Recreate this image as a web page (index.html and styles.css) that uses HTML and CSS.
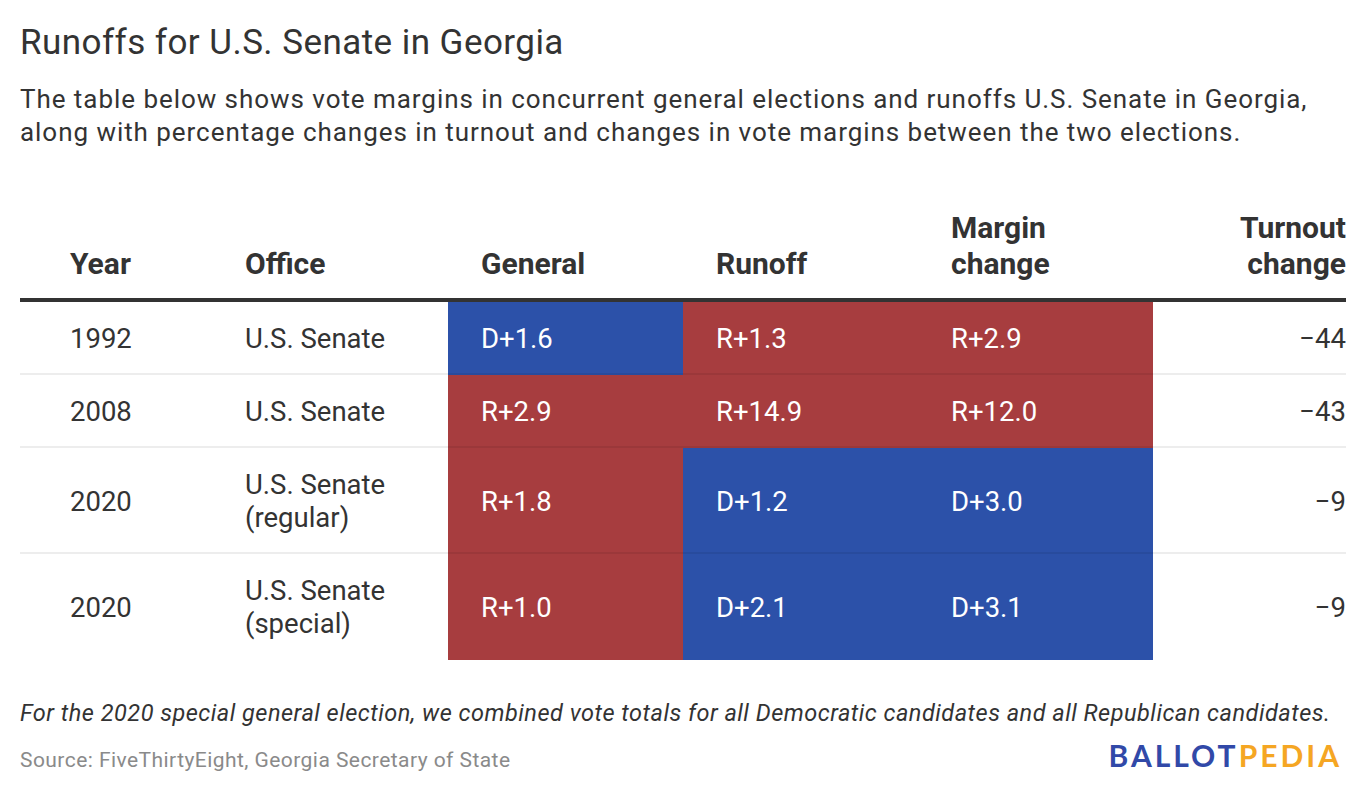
FILE: index.html
```html
<!DOCTYPE html>
<html lang="en">
<head>
<meta charset="utf-8">
<title>Runoffs for U.S. Senate in Georgia</title>
<link rel="stylesheet" href="styles.css">
</head>
<body>
<div class="chart">
  <h1 class="title">Runoffs for U.S. Senate in Georgia</h1>
  <p class="desc">The table below shows vote margins in concurrent general elections and runoffs U.S. Senate in Georgia, along with percentage changes in turnout and changes in vote margins between the two elections.</p>
  <table class="data">
    <colgroup>
      <col class="c-year"><col class="c-office"><col class="c-val"><col class="c-val"><col class="c-val"><col class="c-turn">
    </colgroup>
    <thead>
      <tr>
        <th class="year">Year</th>
        <th class="office">Office</th>
        <th class="val">General</th>
        <th class="val">Runoff</th>
        <th class="val">Margin<br>change</th>
        <th class="turn">Turnout<br>change</th>
      </tr>
    </thead>
    <tbody>
      <tr>
        <td class="year">1992</td>
        <td class="office">U.S. Senate</td>
        <td class="val dem">D+1.6</td>
        <td class="val rep">R+1.3</td>
        <td class="val rep">R+2.9</td>
        <td class="turn">&minus;44</td>
      </tr>
      <tr>
        <td class="year">2008</td>
        <td class="office">U.S. Senate</td>
        <td class="val rep">R+2.9</td>
        <td class="val rep">R+14.9</td>
        <td class="val rep">R+12.0</td>
        <td class="turn">&minus;43</td>
      </tr>
      <tr>
        <td class="year">2020</td>
        <td class="office">U.S. Senate<br>(regular)</td>
        <td class="val rep">R+1.8</td>
        <td class="val dem">D+1.2</td>
        <td class="val dem">D+3.0</td>
        <td class="turn">&minus;9</td>
      </tr>
      <tr class="last">
        <td class="year">2020</td>
        <td class="office">U.S. Senate<br>(special)</td>
        <td class="val rep">R+1.0</td>
        <td class="val dem">D+2.1</td>
        <td class="val dem">D+3.1</td>
        <td class="turn">&minus;9</td>
      </tr>
    </tbody>
  </table>
  <p class="note">For the 2020 special general election, we combined vote totals for all Democratic candidates and all Republican candidates.</p>
  <div class="footer">
    <span class="source">Source: FiveThirtyEight, Georgia Secretary of State</span>
    <span class="logo"><span class="logo-a">BALLOT</span><span class="logo-b">PEDIA</span></span>
  </div>
</div>
</body>
</html>
```
FILE: styles.css
```css
html, body {
  margin: 0;
  padding: 0;
  background: #ffffff;
}
body {
  font-family: Roboto, "Liberation Sans", sans-serif;
  color: #333333;
}
.chart {
  padding: 23px 20px 0 20px;
  width: 1326px;
}
.title {
  margin: 0;
  font-size: 35px;
  line-height: 40px;
  letter-spacing: 0.45px;
  font-weight: 400;
  color: #333333;
}
.desc {
  margin: 20px 0 0 0;
  font-size: 26px;
  line-height: 33px;
  letter-spacing: 0.95px;
  color: #333333;
}
.data {
  margin-top: 61px;
  width: 1326px;
  table-layout: fixed;
  border-collapse: separate;
  border-spacing: 0;
}
.c-year { width: 192px; }
.c-office { width: 236px; }
.c-val { width: 235px; }
.c-turn { width: 193px; }
.data th {
  font-size: 30px;
  line-height: 36px;
  font-weight: 700;
  color: #333333;
  text-align: left;
  vertical-align: bottom;
  padding: 0 0 16px 33px;
  border-bottom: 4px solid #333333;
  white-space: nowrap;
}
.data td {
  font-size: 27.5px;
  line-height: 33px;
  padding: 20px 0 18px 33px;
  border-bottom: 2px solid rgba(0, 0, 0, 0.07);
  vertical-align: middle;
  color: #333333;
}
.data tr.last td {
  border-bottom: 0;
  padding-bottom: 20px;
}
.data .year { padding-left: 50px; }
.data .turn {
  text-align: right;
  padding-left: 0;
  padding-right: 0;
}
.data td.dem {
  background: #2c51a9;
  color: #ffffff;
}
.data td.rep {
  background: #a73d3f;
  color: #ffffff;
}
.note {
  margin: 39px 0 0 0;
  font-size: 23.5px;
  line-height: 28px;
  letter-spacing: 0.5px;
  font-style: italic;
  color: #333333;
}
.footer {
  margin-top: 13px;
  display: flex;
  justify-content: space-between;
  align-items: baseline;
}
.source {
  font-size: 21px;
  line-height: 26px;
  letter-spacing: 0.44px;
  color: #8a8a8a;
}
.logo {
  font-family: Lato, "Open Sans", sans-serif;
  font-weight: 700;
  font-size: 30px;
  letter-spacing: 3px;
  line-height: 30px;
  margin-right: 4px;
}
.logo-a { color: #3149a8; }
.logo-b { color: #f5a623; }
```
